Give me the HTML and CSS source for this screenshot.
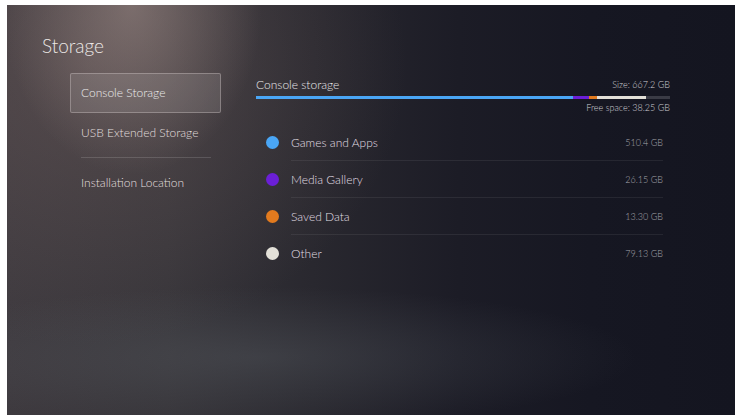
FILE: index.html
```html
<!DOCTYPE HTML>
<html>
<head>
<meta charset="utf-8">
<title>Storage</title>
<link rel="stylesheet" href="styles.css">
</head>
<body>
<div class="screen">
  <div class="title">Storage</div>
  <div class="content">
    <div class="menu">
      <div class="item selected">Console Storage</div>
      <div class="item">USB Extended Storage</div>
      <div class="sep"></div>
      <div class="item">Installation Location</div>
    </div>
    <div class="main">
      <div class="head">
        <span class="name">Console storage</span>
        <span class="small">Size: 667.2 GB</span>
      </div>
      <div class="bar">
        <div class="seg games" style="width:76.5%"></div>
        <div class="seg media" style="width:3.9%"></div>
        <div class="seg saved" style="width:2%"></div>
        <div class="seg other" style="width:11.9%"></div>
      </div>
      <div class="free small">Free space: 38.25 GB</div>
      <div class="rows">
        <div class="row"><span class="dot games"></span><div class="cell"><span>Games and Apps</span><span class="val">510.4 GB</span></div></div>
        <div class="row"><span class="dot media"></span><div class="cell"><span>Media Gallery</span><span class="val">26.15 GB</span></div></div>
        <div class="row"><span class="dot saved"></span><div class="cell"><span>Saved Data</span><span class="val">13.30 GB</span></div></div>
        <div class="row"><span class="dot other"></span><div class="cell"><span>Other</span><span class="val">79.13 GB</span></div></div>
      </div>
    </div>
  </div>
</div>
</body>
</html>
```

FILE: styles.css
```css
html { height:100%; }
body { margin:0; padding:0; background:#fff; font-family:"Lato", "Open Sans", sans-serif; font-weight:300; }
.screen { margin:5px 0 0 7px; width:728px; height:410px; box-sizing:border-box; padding:31px 0 0 35px; color:#e4e2e2;
  background:
    radial-gradient(ellipse 130px 170px at 125px 0px, rgba(170,150,145,0.5), rgba(170,150,145,0) 100%),
    radial-gradient(ellipse 380px 70px at 250px 352px, rgba(105,112,118,0.28), rgba(105,112,118,0) 100%),
    radial-gradient(ellipse 320px 280px at 80px 60px, rgba(120,100,98,0.4), rgba(120,100,98,0) 100%),
    linear-gradient(90deg, #3e3a3f 0%, #37353a 22%, #29282f 42%, #1c1c26 62%, #161722 80%, #141520 100%);
}
.title { font-size:19px; line-height:20px; height:20px; color:#ece8e6; }
.content { display:flex; margin-top:17px; }
.menu { width:151px; margin-left:28px; }
.item { height:40px; line-height:40px; padding-left:11px; font-size:12px; color:#e2dfdf; box-sizing:border-box; }
.selected { background:rgba(200,190,190,0.16); border:1px solid rgba(220,210,210,0.35); border-radius:2px; padding-left:10px; line-height:38px; color:#ecebeb; }
.sep { height:1px; margin:4px 10px 5px 11px; background:rgba(255,255,255,0.14); }
.main { width:414px; margin-left:35px; padding-top:3px; }
.head { display:flex; justify-content:space-between; align-items:center; height:16px; }
.name { font-size:12px; color:#e8e7ea; }
.small { font-size:9px; color:#d0cfd4; }
.bar { display:flex; height:3px; margin-top:4px; background:#3a3b45; }
.seg { height:3px; }
.games { background:#4aa6f5; }
.media { background:#6b1fd6; }
.saved { background:#e27a1e; }
.other { background:#e3e0d8; }
.free { text-align:right; margin-top:3px; line-height:12px; height:12px; }
.rows { margin-top:10px; }
.row { display:flex; align-items:center; height:37px; padding:0 7px 0 10px; }
.dot { width:13px; height:13px; border-radius:50%; margin-right:12px; flex:none; }
.cell { flex:1; display:flex; justify-content:space-between; align-items:center; height:36px; border-bottom:1px solid rgba(255,255,255,0.07); font-size:12px; color:#e0dfe4; }
.row:last-child .cell { border-bottom-color:transparent; }
.val { font-size:9px; color:#a6a6ad; }
```
